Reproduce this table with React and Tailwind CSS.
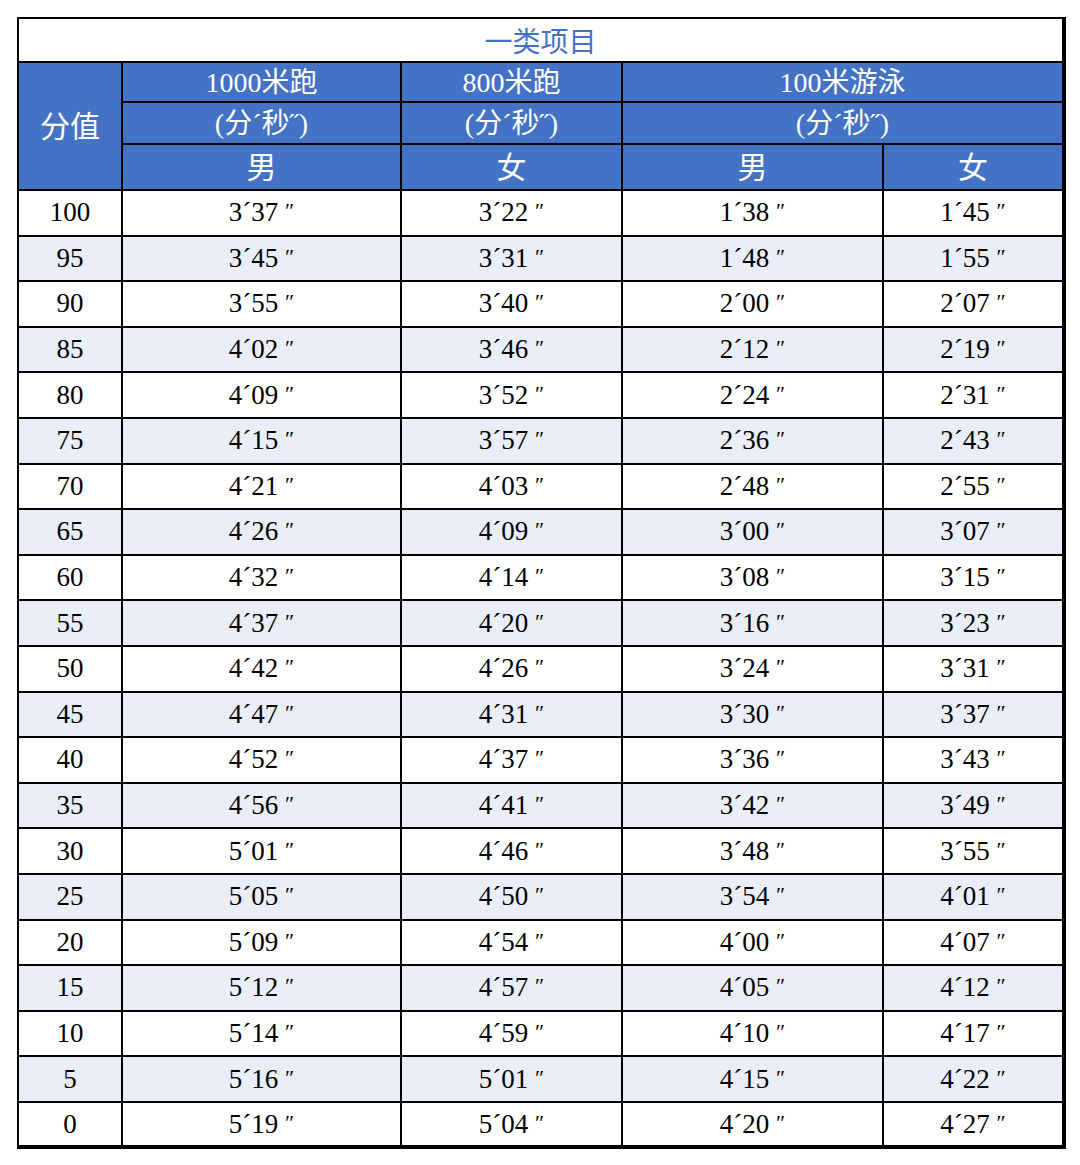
const rows = [
  ["100", "3´37", "3´22", "1´38", "1´45"],
  ["95", "3´45", "3´31", "1´48", "1´55"],
  ["90", "3´55", "3´40", "2´00", "2´07"],
  ["85", "4´02", "3´46", "2´12", "2´19"],
  ["80", "4´09", "3´52", "2´24", "2´31"],
  ["75", "4´15", "3´57", "2´36", "2´43"],
  ["70", "4´21", "4´03", "2´48", "2´55"],
  ["65", "4´26", "4´09", "3´00", "3´07"],
  ["60", "4´32", "4´14", "3´08", "3´15"],
  ["55", "4´37", "4´20", "3´16", "3´23"],
  ["50", "4´42", "4´26", "3´24", "3´31"],
  ["45", "4´47", "4´31", "3´30", "3´37"],
  ["40", "4´52", "4´37", "3´36", "3´43"],
  ["35", "4´56", "4´41", "3´42", "3´49"],
  ["30", "5´01", "4´46", "3´48", "3´55"],
  ["25", "5´05", "4´50", "3´54", "4´01"],
  ["20", "5´09", "4´54", "4´00", "4´07"],
  ["15", "5´12", "4´57", "4´05", "4´12"],
  ["10", "5´14", "4´59", "4´10", "4´17"],
  ["5", "5´16", "5´01", "4´15", "4´22"],
  ["0", "5´19", "5´04", "4´20", "4´27"],
];

const head = "border-2 border-black bg-[#4472c4] text-white text-[28px] font-normal leading-none p-0 pt-[2px]";
const cell = "border-2 border-black text-center text-[27px] leading-none p-0";
const latin = "font-['Liberation_Serif',serif]";

export default function App() {
  return (
    <div
      className="w-[1080px] h-[1165px] bg-white pt-[17px] pl-[17px]"
      style={{ fontFamily: '"Liberation Serif", "Noto Sans CJK SC", serif' }}
    >
      <table className="table-fixed border-collapse w-[1046px] border-r-[4px] border-b-[4px] border-black">
        <colgroup>
          <col className="w-[104px]" />
          <col className="w-[279px]" />
          <col className="w-[221px]" />
          <col className="w-[261px]" />
          <col className="w-[181px]" />
        </colgroup>
        <thead>
          <tr className="h-[44px]">
            <th colSpan={5} className="border-2 border-black text-[#4472c4] text-[28px] font-normal leading-none pt-[6px]">
              一类项目
            </th>
          </tr>
          <tr className="h-[40px]">
            <th rowSpan={3} className={head + " text-[30px]"}>分值</th>
            <th className={head}><span className={latin}>1000</span>米跑</th>
            <th className={head}><span className={latin}>800</span>米跑</th>
            <th colSpan={2} className={head}><span className={latin}>100</span>米游泳</th>
          </tr>
          <tr className="h-[42px]">
            <th className={head}><span className={latin}>(</span>分´秒˝<span className={latin}>)</span></th>
            <th className={head}><span className={latin}>(</span>分´秒˝<span className={latin}>)</span></th>
            <th colSpan={2} className={head}><span className={latin}>(</span>分´秒˝<span className={latin}>)</span></th>
          </tr>
          <tr className="h-[46px]">
            <th className={head + " text-[30px]"}>男</th>
            <th className={head + " text-[30px]"}>女</th>
            <th className={head + " text-[30px]"}>男</th>
            <th className={head + " text-[30px]"}>女</th>
          </tr>
        </thead>
        <tbody>
          {rows.map((r, i) => (
            <tr key={r[0]} className={"h-[45.6px] " + (i % 2 === 1 ? "bg-[#e9eef8]" : "bg-white")}>
              <td className={cell}>{r[0]}</td>
              {r.slice(1).map((v, j) => (
                <td key={j} className={cell}>
                  {v} <span className="text-[22px] relative -top-[3px]">″</span>
                </td>
              ))}
            </tr>
          ))}
        </tbody>
      </table>
    </div>
  );
}
